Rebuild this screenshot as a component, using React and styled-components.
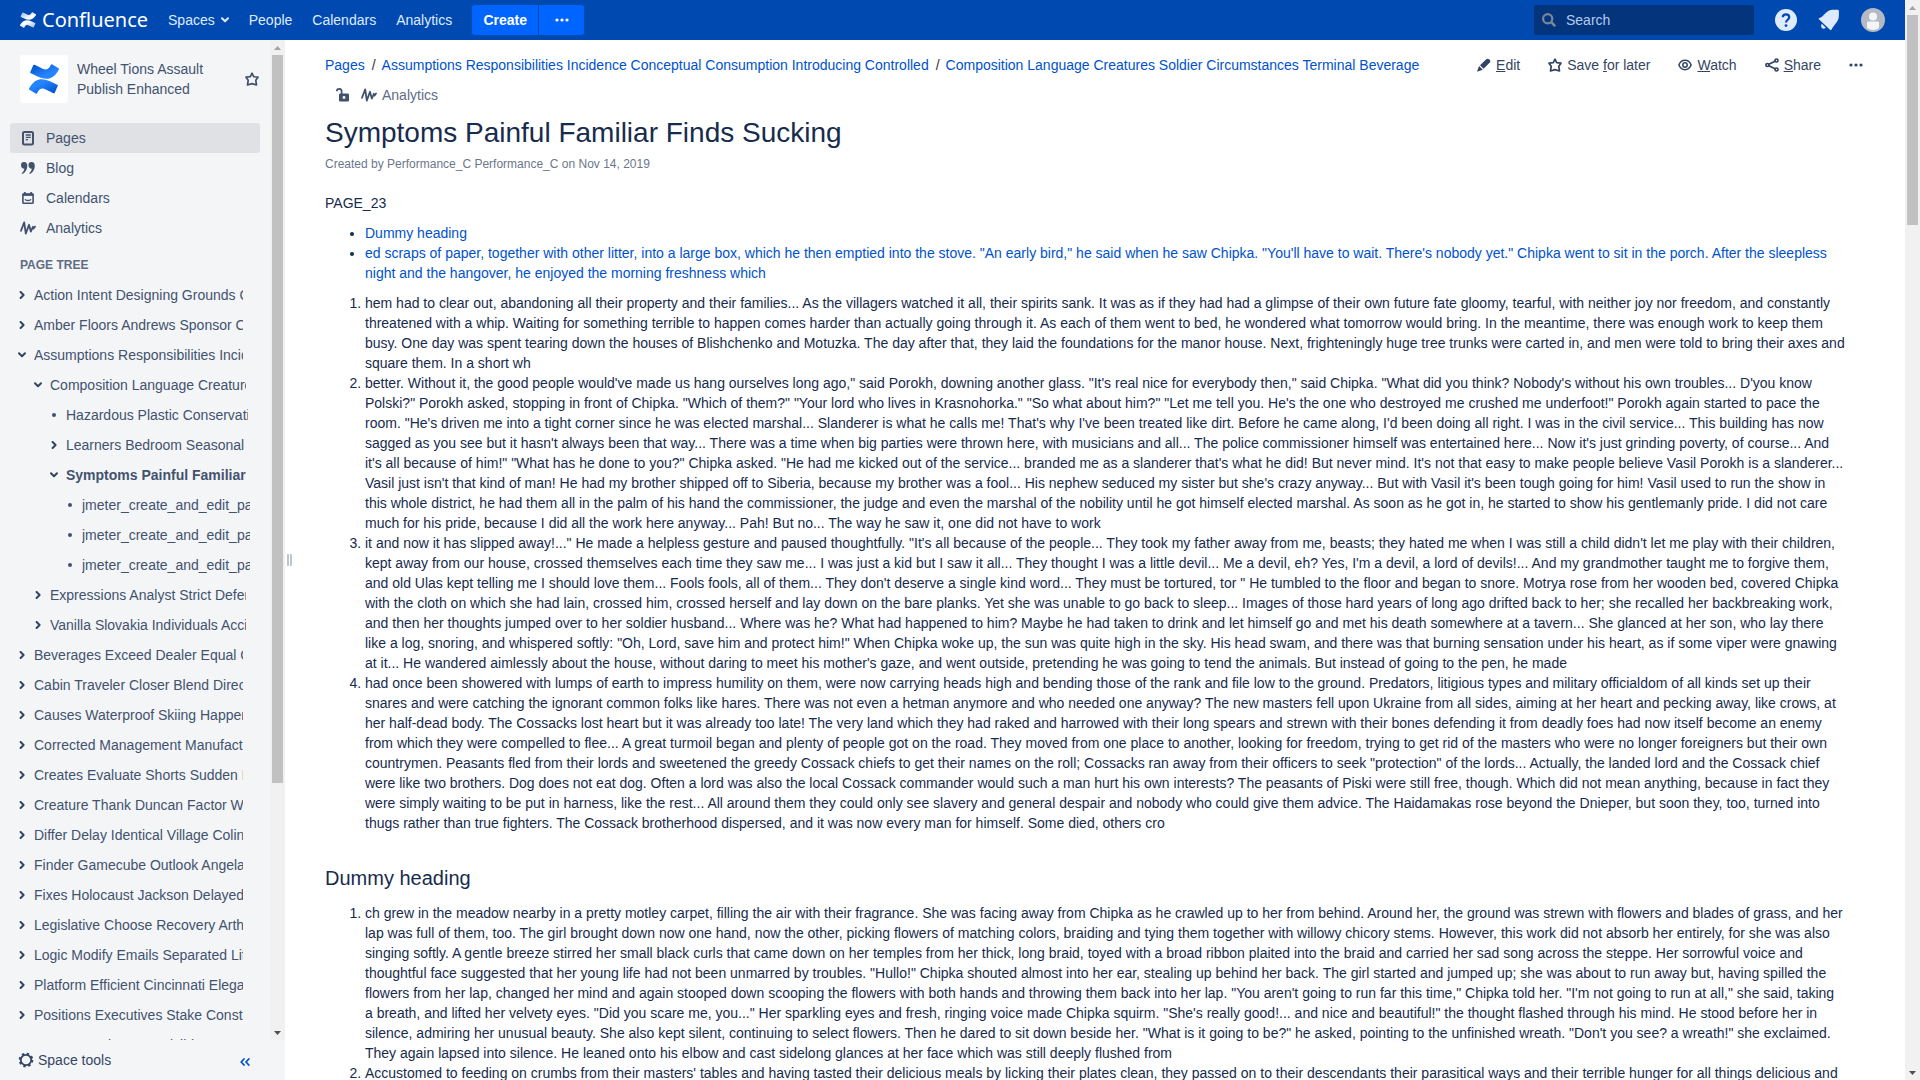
import React from 'react';
import styled, { createGlobalStyle } from 'styled-components';

const GlobalStyle = createGlobalStyle`
  * { box-sizing: border-box; }
  body {
    margin: 0;
    background: #fff;
    color: #172b4d;
    font-family: "Liberation Sans", Arial, sans-serif;
    font-size: 14px;
    line-height: 20px;
  }
  a { color: inherit; text-decoration: none; }
  button, input { font: inherit; }
  svg { display: block; flex: none; }
`;

const Window = styled.div`
  display: flex;
  height: 100vh;
  overflow: hidden;
`;

const Column = styled.div`
  flex: 1;
  min-width: 0;
  display: flex;
  flex-direction: column;
`;

/* ---------- header ---------- */

const Header = styled.header`
  flex: none;
  display: flex;
  align-items: center;
  justify-content: space-between;
  height: 40px;
  padding: 0 20px;
  background: #0049b0;
  color: #deebff;
`;

const HeaderSide = styled.div`
  display: flex;
  align-items: center;
  gap: ${(p) => p.$gap || 0}px;
`;

const Brand = styled.a`
  display: flex;
  align-items: center;
  gap: 6px;
  margin-right: 10px;
  color: #fff;
  font-family: "Noto Sans", sans-serif;
  font-size: 20px;
`;

const NavLink = styled.a`
  display: flex;
  align-items: center;
  gap: 6px;
  padding: 0 10px;
`;

const CreateGroup = styled.div`
  display: flex;
  gap: 1px;
  margin-left: 10px;
`;

const CreateButton = styled.button`
  display: flex;
  align-items: center;
  justify-content: center;
  width: ${(p) => p.$width}px;
  height: 30px;
  padding: 0;
  border: 0;
  border-radius: ${(p) => (p.$end ? '0 3px 3px 0' : '3px 0 0 3px')};
  background: #0065ff;
  color: #fff;
  font-weight: bold;
`;

const SearchBox = styled.label`
  display: flex;
  align-items: center;
  gap: 10px;
  width: 220px;
  height: 30px;
  padding: 0 8px;
  border-radius: 3px;
  background: #03347c;
`;

const SearchInput = styled.input`
  flex: 1;
  min-width: 0;
  padding: 0;
  border: 0;
  outline: 0;
  background: transparent;
  color: #deebff;
  &::placeholder { color: #b3cbee; opacity: 1; }
`;

const IconButton = styled.button`
  display: flex;
  align-items: center;
  padding: 0;
  border: 0;
  background: none;
  color: inherit;
`;

/* ---------- scroll bars ---------- */

const Track = styled.div`
  flex: none;
  display: flex;
  flex-direction: column;
  align-items: center;
  width: 15px;
  background: #f1f1f1;
`;

const TrackEnd = styled.div`
  flex: none;
  display: flex;
  align-items: center;
  justify-content: center;
  height: 15px;
`;

const TrackBody = styled.div`
  flex: 1;
  width: 11px;
`;

const Thumb = styled.div`
  height: ${(p) => p.$size}%;
  background: #c1c1c1;
`;

function ScrollBar({ size }) {
  return (
    <Track aria-hidden="true">
      <TrackEnd><svg width="7" height="4"><path d="M3.5 0 7 4H0z" fill="#a3a3a3" /></svg></TrackEnd>
      <TrackBody><Thumb $size={size} /></TrackBody>
      <TrackEnd><svg width="7" height="4"><path d="M0 0h7L3.5 4z" fill="#505050" /></svg></TrackEnd>
    </Track>
  );
}

/* ---------- side bar ---------- */

const Body = styled.div`
  flex: 1;
  min-height: 0;
  display: flex;
`;

const Sidebar = styled.aside`
  flex: none;
  display: flex;
  flex-direction: column;
  width: 285px;
  background: #f4f5f7;
  color: #42526e;
`;

const SideScroll = styled.div`
  flex: 1;
  min-height: 0;
  display: flex;
`;

const SideContent = styled.div`
  flex: 1;
  min-width: 0;
  overflow: hidden;
  padding: 15px 10px 0;
`;

const SpaceHead = styled.div`
  display: flex;
  align-items: center;
  gap: 9px;
  padding: 0 1px 0 10px;
  margin-bottom: 20px;
`;

const SpaceLogo = styled.a`
  flex: none;
  display: flex;
  align-items: center;
  justify-content: center;
  width: 48px;
  height: 48px;
  border-radius: 3px;
  background: #fff;
`;

const SpaceName = styled.a`
  flex: 1;
`;

const SideLink = styled.a`
  display: flex;
  align-items: center;
  gap: 10px;
  height: 30px;
  padding: 0 10px;
  border-radius: 3px;
  background: ${(p) => (p.$active ? '#dfe1e5' : 'transparent')};
`;

const TreeTitle = styled.h2`
  margin: 0;
  padding: 12px 10px 5px;
  color: #5e6c84;
  font-size: 12px;
  line-height: 20px;
`;

const Tree = styled.ul`
  margin: 0;
  padding: 0;
  list-style: none;
`;

const TREE_END = [17, 14, 12, 10];

const TreeItem = styled.li`
  display: flex;
  align-items: center;
  gap: 4px;
  height: 30px;
  padding-left: ${(p) => 4 + p.$level * 16}px;
  padding-right: ${(p) => TREE_END[p.$level]}px;
`;

const Twisty = styled.button`
  flex: none;
  display: flex;
  align-items: center;
  justify-content: center;
  width: 16px;
  height: 16px;
  padding: 0;
  border: 0;
  background: none;
  color: #344563;
`;

const Dot = styled.span`
  flex: none;
  width: 16px;
  display: flex;
  justify-content: center;
  &::before {
    content: "";
    width: 4px;
    height: 4px;
    border-radius: 50%;
    background: #42526e;
  }
`;

const TreeLink = styled.a`
  flex: 1;
  overflow: hidden;
  white-space: nowrap;
  font-weight: ${(p) => (p.$current ? 'bold' : 'normal')};
`;

const SideFoot = styled.div`
  flex: none;
  display: flex;
  align-items: center;
  justify-content: space-between;
  height: 40px;
  padding: 0 35px 0 18px;
`;

const FootButton = styled(IconButton)`
  gap: 4px;
  color: #344563;
`;

const CollapseButton = styled(IconButton)`
  padding-top: 4px;
  color: #0052cc;
`;

const Splitter = styled.div`
  flex: none;
  display: flex;
  align-items: center;
  gap: 1px;
  width: 10px;
  padding-left: 2px;
  &::before, &::after {
    content: "";
    width: 2px;
    height: 12px;
    background: #c1c7d0;
  }
`;

/* ---------- page ---------- */

const Main = styled.main`
  flex: 1;
  min-width: 0;
  overflow: hidden;
  padding: 10px 40px 0 30px;
`;

const TopRow = styled.div`
  display: flex;
  align-items: flex-start;
`;

const Crumbs = styled.nav`
  flex: 1;
  min-width: 0;
  display: flex;
  flex-wrap: wrap;
  line-height: 30px;
`;

const Crumb = styled.a`
  color: #0052cc;
`;

const Slash = styled.span`
  padding: 0 6px 0 7px;
  color: #333;
`;

const CrumbTools = styled.div`
  display: flex;
  align-items: center;
  gap: 10px;
  padding: 0 10px;
  height: 30px;
`;

const CrumbButton = styled(IconButton)`
  gap: 5px;
  color: #42526e;
`;

const Analytics = styled.span`
  color: #5e6c84;
`;

const Actions = styled.div`
  display: flex;
  align-items: center;
  gap: 28px;
  height: 30px;
  padding-right: 2px;
`;

const Action = styled.a`
  display: flex;
  align-items: center;
  gap: 5px;
  color: #344563;
`;

const MoreButton = styled(IconButton)`
  color: #344563;
`;

const Title = styled.h1`
  margin: 7px 0 0;
  font-size: 28px;
  font-weight: normal;
  line-height: 32px;
`;

const Meta = styled.p`
  margin: 5px 0 0;
  color: #6b778c;
  font-size: 12px;
`;

const Article = styled.article`
  padding: 19px 20px 0 0;
  p { margin: 0; }
  ul, ol { margin: 10px 0 0; padding-left: 40px; }
  h2 {
    margin: 30px 0 0;
    font-size: 20px;
    font-weight: normal;
    line-height: 30px;
  }
  a { color: #0052cc; }
`;

/* ---------- drawings ---------- */

const MARK_LOW = 'M.87 18.257c-.248.382-.53.875-.763 1.245a.764.764 0 0 0 .255 1.04l4.965 3.054a.764.764 0 0 0 1.058-.26c.199-.332.454-.763.733-1.221 1.967-3.247 3.945-2.853 7.508-1.146l4.957 2.337a.764.764 0 0 0 1.028-.382l2.364-5.346a.764.764 0 0 0-.382-1 599.851 599.851 0 0 1-4.965-2.361C10.911 10.97 5.224 11.185.87 18.257z';
const MARK_HIGH = 'M23.131 5.743c.249-.405.531-.875.764-1.25a.764.764 0 0 0-.256-1.034L18.675.404a.764.764 0 0 0-1.058.26c-.195.335-.451.763-.734 1.225-1.966 3.246-3.945 2.85-7.508 1.146L4.437.694a.764.764 0 0 0-1.027.382L1.046 6.422a.764.764 0 0 0 .382 1c1.039.49 3.105 1.467 4.965 2.361 6.698 3.246 12.392 3.029 16.738-4.04z';

function Mark({ id, size, dark, light }) {
  return (
    <svg width={size} height={size} viewBox="0 0 24 24">
      <defs>
        <linearGradient id={`${id}-low`} x1="1" y1="1" x2="0.2" y2="0.2">
          <stop offset="0.1" stopColor={dark} /><stop offset="0.8" stopColor={light} />
        </linearGradient>
        <linearGradient id={`${id}-high`} x1="0" y1="0" x2="0.8" y2="0.8">
          <stop offset="0.1" stopColor={dark} /><stop offset="0.8" stopColor={light} />
        </linearGradient>
      </defs>
      <path d={MARK_LOW} fill={`url(#${id}-low)`} />
      <path d={MARK_HIGH} fill={`url(#${id}-high)`} />
    </svg>
  );
}

const Line = ({ w = 16, h = 16, sw = 2, children }) => (
  <svg width={w} height={h} viewBox={`0 0 ${w} ${h}`} fill="none" stroke="currentColor" strokeWidth={sw} strokeLinecap="round" strokeLinejoin="round">
    {children}
  </svg>
);

const ChevronDown = () => <Line w={8} h={6}><path d="M1 1.2l3 3 3-3" /></Line>;
const ChevronRight = () => <Line w={6} h={8}><path d="M1.6 1l3 3-3 3" /></Line>;
const Collapse = () => <Line w={10} h={8} sw={1.8}><path d="M4 1L1.2 4 4 7M8.8 1L6 4l2.8 3" /></Line>;
const Dots = () => (
  <svg width="14" height="4" fill="currentColor"><circle cx="2" cy="2" r="1.6" /><circle cx="7" cy="2" r="1.6" /><circle cx="12" cy="2" r="1.6" /></svg>
);
const Star = () => (
  <Line w={14} h={14} sw={1.7}><path d="M7 1.2l1.7 3.5 4.3.5-2.2 3.1.7 4.7L7 11.6 2.5 13l.7-4.7L1 5.2l4.3-.5z" /></Line>
);
const Wave = () => (
  <Line w={16} h={14} sw={1.8}><path d="M1 9.800L4.200 1.400 5.800 12.600 9 3.800 10.800 10.600 12.900 5.800 13.600 7.600 15 5.600" /></Line>
);
const PageIcon = () => (
  <Line><rect x="3" y="2" width="10" height="12.5" rx="1.5" /><path d="M5.800 5h5M5.800 7.300h5M5.800 9.600h2.200" strokeWidth="1.300" strokeLinecap="butt" /></Line>
);
const QuoteIcon = () => (
  <svg width="16" height="16" fill="currentColor">
    <path d="M1 5.2A3.1 3.1 0 0 1 4.200 2C6.200 2 7.300 3.600 7.300 6c0 3.600-2 6.600-4.900 8l-.7-.8c1.500-1.200 2.400-2.700 2.600-4.500C2.400 8.700 1 7.200 1 5.200z" />
    <path d="M8.500 5.200A3.1 3.1 0 0 1 11.700 2c2 0 3.100 1.600 3.100 4 0 3.600-2 6.600-4.900 8l-.7-.8c1.500-1.200 2.400-2.700 2.600-4.500-1.900 0-3.300-1.500-3.300-3.500z" />
  </svg>
);
const CalendarIcon = () => (
  <svg width="16" height="16" fill="none" stroke="currentColor">
    <rect x="2.900" y="4" width="10.200" height="9.200" rx="0.800" strokeWidth="1.600" />
    <path d="M2.500 4.700h11" strokeWidth="2.400" />
    <path d="M4.800 2v2M11.200 2v2" strokeWidth="1.800" />
    <path d="M5 9.200c.8 1.700 5.200 1.700 6 0" strokeWidth="1.300" />
  </svg>
);
const GearIcon = () => (
  <svg width="16" height="16" viewBox="0 0 16 16" fill="none" stroke="currentColor">
    <circle cx="8" cy="8" r="5.200" strokeWidth="1.800" />
    <circle cx="8" cy="8" r="6.300" strokeWidth="2" strokeDasharray="2.470 2.470" />
  </svg>
);
const LockIcon = () => (
  <svg width="16" height="16">
    <rect x="4" y="6.500" width="10" height="8" rx="1.200" fill="#42526e" />
    <path d="M1.800 4.200a2.400 2.400 0 0 1 4.800 0v3" fill="none" stroke="#42526e" strokeWidth="1.700" />
    <circle cx="9" cy="10.500" r="1.400" fill="#fff" />
  </svg>
);
const PencilIcon = () => (
  <svg width="14" height="14" fill="currentColor">
    <path d="M9.300 1.300c.9-.9 2-.8 2.800-.1l.7.700c.8.800.8 1.900 0 2.700L6.600 10.800 3 7.300zM2.100 8.100l3.700 3.700L.8 13.500c-.4.100-.7-.2-.6-.6z" />
  </svg>
);
const EyeIcon = () => (
  <Line w={14} h={14} sw={1.5}><path d="M.9 7C3.200.8 10.800.8 13.100 7 10.800 13.200 3.200 13.200.9 7z" /><circle cx="7" cy="7" r="2.200" /></Line>
);
const ShareIcon = () => (
  <Line w={14} h={14} sw={1.7}>
    <circle cx="11.500" cy="2.500" r="1.500" /><circle cx="2.400" cy="7" r="1.500" /><circle cx="11.500" cy="11.500" r="1.500" />
    <path d="M3.800 6.300l6.300-3.100M3.800 7.700l6.300 3.100" />
  </Line>
);
const SearchIcon = () => (
  <svg width="14" height="14" fill="none" stroke="#7a8699"><circle cx="5.700" cy="5.700" r="4.600" strokeWidth="2.200" /><path d="M9.200 9.200l4 4" strokeWidth="2.600" /></svg>
);
const HelpIcon = () => (
  <svg width="22" height="22" fill="none">
    <circle cx="11" cy="11" r="11" fill="#deebff" />
    <path d="M7.800 8.300c0-4 6.400-4 6.400 0 0 2.400-3.200 2.500-3.200 5.200" stroke="#0049b0" strokeWidth="2.200" />
    <circle cx="11" cy="16.600" r="1.400" fill="#0049b0" />
  </svg>
);
const BellIcon = () => (
  <svg width="22" height="22" fill="#deebff">
    <path d="M1 9.300C6.500 7.600 8 .8 15 .8c2.500 0 4.600-.3 5.200 0 1 .6.700 2.300.7 5.700 0 6-4.500 8.500-7.500 14.200-.2.500-.7.600-1.100.2L.9 10.200c-.4-.4-.3-.8.1-.9z" />
    <path d="M3.800 14.800l4 4c-1.500 1.500-3 1.200-3.800.3-.9-.9-1.200-2.700-.2-4.300z" />
  </svg>
);
const Avatar = () => (
  <svg width="24" height="24">
    <circle cx="12" cy="12" r="12" fill="#b3bac5" />
    <circle cx="12" cy="8.500" r="4" fill="#f4f5f7" />
    <path d="M6 15.500c0-1.500.7-2 2-2h8c1.300 0 2 .5 2 2v4.200c-3 3-9 3-12 0z" fill="#f4f5f7" />
  </svg>
);

/* ---------- data ---------- */

const SIDE_LINKS = [
  ['Pages', PageIcon],
  ['Blog', QuoteIcon],
  ['Calendars', CalendarIcon],
  ['Analytics', Wave],
];

// [label, level, state, current]
const TREE = [
  ['Action Intent Designing Grounds Creek', 0, 'closed'],
  ['Amber Floors Andrews Sponsor Charm', 0, 'closed'],
  ['Assumptions Responsibilities Incidence Conceptual Consumption', 0, 'open'],
  ['Composition Language Creatures Soldier Circumstances', 1, 'open'],
  ['Hazardous Plastic Conservation', 2, 'leaf'],
  ['Learners Bedroom Seasonal', 2, 'closed'],
  ['Symptoms Painful Familiar Finds Sucking', 2, 'open', true],
  ['jmeter_create_and_edit_page', 3, 'leaf'],
  ['jmeter_create_and_edit_page', 3, 'leaf'],
  ['jmeter_create_and_edit_page', 3, 'leaf'],
  ['Expressions Analyst Strict Defense', 1, 'closed'],
  ['Vanilla Slovakia Individuals Accident', 1, 'closed'],
  ['Beverages Exceed Dealer Equal Cheap', 0, 'closed'],
  ['Cabin Traveler Closer Blend Direct', 0, 'closed'],
  ['Causes Waterproof Skiing Happened', 0, 'closed'],
  ['Corrected Management Manufacturing', 0, 'closed'],
  ['Creates Evaluate Shorts Sudden Drives', 0, 'closed'],
  ['Creature Thank Duncan Factor Wood', 0, 'closed'],
  ['Differ Delay Identical Village Colin', 0, 'closed'],
  ['Finder Gamecube Outlook Angela', 0, 'closed'],
  ['Fixes Holocaust Jackson Delayed', 0, 'closed'],
  ['Legislative Choose Recovery Arthur', 0, 'closed'],
  ['Logic Modify Emails Separated Lifetime', 0, 'closed'],
  ['Platform Efficient Cincinnati Elegant', 0, 'closed'],
  ['Positions Executives Stake Construct', 0, 'closed'],
  ['Programs Elements Visible', 0, 'closed'],
];

const FIRST_LIST = [
  `hem had to clear out, abandoning all their property and their families... As the villagers watched it all, their spirits sank. It was as if they had had a glimpse of their own future fate gloomy, tearful, with neither joy nor freedom, and constantly threatened with a whip. Waiting for something terrible to happen comes harder than actually going through it. As each of them went to bed, he wondered what tomorrow would bring. In the meantime, there was enough work to keep them busy. One day was spent tearing down the houses of Blishchenko and Motuzka. The day after that, they laid the foundations for the manor house. Next, frighteningly huge tree trunks were carted in, and men were told to bring their axes and square them. In a short wh`,
  `better. Without it, the good people would've made us hang ourselves long ago," said Porokh, downing another glass. "It's real nice for everybody then," said Chipka. "What did you think? Nobody's without his own troubles... D'you know Polski?" Porokh asked, stopping in front of Chipka. "Which of them?" "Your lord who lives in Krasnohorka." "So what about him?" "Let me tell you. He's the one who destroyed me crushed me underfoot!" Porokh again started to pace the room. "He's driven me into a tight corner since he was elected marshal... Slanderer is what he calls me! That's why I've been treated like dirt. Before he came along, I'd been doing all right. I was in the civil service... This building has now sagged as you see but it hasn't always been that way... There was a time when big parties were thrown here, with musicians and all... The police commissioner himself was entertained here... Now it's just grinding poverty, of course... And it's all because of him!" "What has he done to you?" Chipka asked. "He had me kicked out of the service... branded me as a slanderer that's what he did! But never mind. It's not that easy to make people believe Vasil Porokh is a slanderer... Vasil just isn't that kind of man! He had my brother shipped off to Siberia, because my brother was a fool... His nephew seduced my sister but she's crazy anyway... But with Vasil it's been tough going for him! Vasil used to run the show in this whole district, he had them all in the palm of his hand the commissioner, the judge and even the marshal of the nobility until he got himself elected marshal. As soon as he got in, he started to show his gentlemanly pride. I did not care much for his pride, because I did all the work here anyway... Pah! But no... The way he saw it, one did not have to work`,
  `it and now it has slipped away!..." He made a helpless gesture and paused thoughtfully. "It's all because of the people... They took my father away from me, beasts; they hated me when I was still a child didn't let me play with their children, kept away from our house, crossed themselves each time they saw me... I was just a kid but I saw it all... They thought I was a little devil... Me a devil, eh? Yes, I'm a devil, a lord of devils!... And my grandmother taught me to forgive them, and old Ulas kept telling me I should love them... Fools fools, all of them... They don't deserve a single kind word... They must be tortured, tor " He tumbled to the floor and began to snore. Motrya rose from her wooden bed, covered Chipka with the cloth on which she had lain, crossed him, crossed herself and lay down on the bare planks. Yet she was unable to go back to sleep... Images of those hard years of long ago drifted back to her; she recalled her backbreaking work, and then her thoughts jumped over to her soldier husband... Where was he? What had happened to him? Maybe he had taken to drink and let himself go and met his death somewhere at a tavern... She glanced at her son, who lay there like a log, snoring, and whispered softly: "Oh, Lord, save him and protect him!" When Chipka woke up, the sun was quite high in the sky. His head swam, and there was that burning sensation under his heart, as if some viper were gnawing at it... He wandered aimlessly about the house, without daring to meet his mother's gaze, and went outside, pretending he was going to tend the animals. But instead of going to the pen, he made`,
  `had once been showered with lumps of earth to impress humility on them, were now carrying heads high and bending those of the rank and file low to the ground. Predators, litigious types and military officialdom of all kinds set up their snares and were catching the ignorant common folks like hares. There was not even a hetman anymore and who needed one anyway? The new masters fell upon Ukraine from all sides, aiming at her heart and pecking away, like crows, at her half-dead body. The Cossacks lost heart but it was already too late! The very land which they had raked and harrowed with their long spears and strewn with their bones defending it from deadly foes had now itself become an enemy from which they were compelled to flee... A great turmoil began and plenty of people got on the road. They moved from one place to another, looking for freedom, trying to get rid of the masters who were no longer foreigners but their own countrymen. Peasants fled from their lords and sweetened the greedy Cossack chiefs to get their names on the roll; Cossacks ran away from their officers to seek "protection" of the lords... Actually, the landed lord and the Cossack chief were like two brothers. Dog does not eat dog. Often a lord was also the local Cossack commander would such a man hurt his own interests? The peasants of Piski were still free, though. Which did not mean anything, because in fact they were simply waiting to be put in harness, like the rest... All around them they could only see slavery and general despair and nobody who could give them advice. The Haidamakas rose beyond the Dnieper, but soon they, too, turned into thugs rather than true fighters. The Cossack brotherhood dispersed, and it was now every man for himself. Some died, others cro`,
];

const SECOND_LIST = [
  `ch grew in the meadow nearby in a pretty motley carpet, filling the air with their fragrance. She was facing away from Chipka as he crawled up to her from behind. Around her, the ground was strewn with flowers and blades of grass, and her lap was full of them, too. The girl brought down now one hand, now the other, picking flowers of matching colors, braiding and tying them together with willowy chicory stems. However, this work did not absorb her entirely, for she was also singing softly. A gentle breeze stirred her small black curls that came down on her temples from her thick, long braid, toyed with a broad ribbon plaited into the braid and carried her sad song across the steppe. Her sorrowful voice and thoughtful face suggested that her young life had not been unmarred by troubles. "Hullo!" Chipka shouted almost into her ear, stealing up behind her back. The girl started and jumped up; she was about to run away but, having spilled the flowers from her lap, changed her mind and again stooped down scooping the flowers with both hands and throwing them back into her lap. "You aren't going to run far this time," Chipka told her. "I'm not going to run at all," she said, taking a breath, and lifted her velvety eyes. "Did you scare me, you..." Her sparkling eyes and fresh, ringing voice made Chipka squirm. "She's really good!... and nice and beautiful!" the thought flashed through his mind. He stood before her in silence, admiring her unusual beauty. She also kept silent, continuing to select flowers. Then he dared to sit down beside her. "What is it going to be?" he asked, pointing to the unfinished wreath. "Don't you see? a wreath!" she exclaimed. They again lapsed into silence. He leaned onto his elbow and cast sidelong glances at her face which was still deeply flushed from`,
  `Accustomed to feeding on crumbs from their masters' tables and having tasted their delicious meals by licking their plates clean, they passed on to their descendants their parasitical ways and their terrible hunger for all things delicious and`,
];

export default function App() {
  return (
    <Window>
      <GlobalStyle />
      <Column>
        <Header>
          <HeaderSide>
            <Brand href="#home"><Mark id="brand" size={16} dark="#9dbbe6" light="#ffffff" />Confluence</Brand>
            <NavLink href="#spaces">Spaces<ChevronDown /></NavLink>
            <NavLink href="#people">People</NavLink>
            <NavLink href="#calendars">Calendars</NavLink>
            <NavLink href="#analytics">Analytics</NavLink>
            <CreateGroup>
              <CreateButton $width={66}>Create</CreateButton>
              <CreateButton $width={45} $end aria-label="Create from template"><Dots /></CreateButton>
            </CreateGroup>
          </HeaderSide>
          <HeaderSide $gap={21}>
            <SearchBox>
              <SearchIcon />
              <SearchInput type="text" placeholder="Search" aria-label="Search" />
            </SearchBox>
            <IconButton aria-label="Help"><HelpIcon /></IconButton>
            <IconButton aria-label="Notifications"><BellIcon /></IconButton>
            <IconButton aria-label="Profile"><Avatar /></IconButton>
          </HeaderSide>
        </Header>

        <Body>
          <Sidebar>
            <SideScroll>
              <SideContent>
                <SpaceHead>
                  <SpaceLogo href="#space" aria-label="Space home"><Mark id="space" size={30} dark="#0052cc" light="#2684ff" /></SpaceLogo>
                  <SpaceName href="#space">Wheel Tions Assault Publish Enhanced</SpaceName>
                  <IconButton aria-label="Favourite space"><Star /></IconButton>
                </SpaceHead>
                <nav>
                  {SIDE_LINKS.map(([label, Icon], i) => (
                    <SideLink key={label} href={`#${label}`} $active={i === 0}><Icon />{label}</SideLink>
                  ))}
                </nav>
                <TreeTitle>PAGE TREE</TreeTitle>
                <Tree>
                  {TREE.map(([label, level, state, current], i) => (
                    <TreeItem key={i} $level={level}>
                      {state === 'leaf' ? <Dot /> : (
                        <Twisty aria-label={label} aria-expanded={state === 'open'}>
                          {state === 'open' ? <ChevronDown /> : <ChevronRight />}
                        </Twisty>
                      )}
                      <TreeLink href="#page" $current={current}>{label}</TreeLink>
                    </TreeItem>
                  ))}
                </Tree>
              </SideContent>
              <ScrollBar size={75} />
            </SideScroll>
            <SideFoot>
              <FootButton><GearIcon />Space tools</FootButton>
              <CollapseButton aria-label="Collapse sidebar"><Collapse /></CollapseButton>
            </SideFoot>
          </Sidebar>
          <Splitter />

          <Main>
            <TopRow>
              <Crumbs>
                <Crumb href="#pages">Pages</Crumb><Slash>/</Slash>
                <Crumb href="#a">Assumptions Responsibilities Incidence Conceptual Consumption Introducing Controlled</Crumb><Slash>/</Slash>
                <Crumb href="#b">Composition Language Creatures Soldier Circumstances Terminal Beverage</Crumb>
                <CrumbTools>
                  <IconButton aria-label="Unrestricted"><LockIcon /></IconButton>
                  <CrumbButton><Wave /><Analytics>Analytics</Analytics></CrumbButton>
                </CrumbTools>
              </Crumbs>
              <Actions>
                <Action href="#edit"><PencilIcon /><span><u>E</u>dit</span></Action>
                <Action href="#save"><Star /><span>Save <u>f</u>or later</span></Action>
                <Action href="#watch"><EyeIcon /><span><u>W</u>atch</span></Action>
                <Action href="#share"><ShareIcon /><span><u>S</u>hare</span></Action>
                <MoreButton aria-label="More actions"><Dots /></MoreButton>
              </Actions>
            </TopRow>
            <Title>Symptoms Painful Familiar Finds Sucking</Title>
            <Meta>Created by <a href="#author">Performance_C Performance_C</a> on <a href="#history">Nov 14, 2019</a></Meta>
            <Article>
              <p>PAGE_23</p>
              <ul>
                <li><a href="#dummy">Dummy heading</a></li>
                <li><a href="#scraps">ed scraps of paper, together with other litter, into a large box, which he then emptied into the stove. "An early bird," he said when he saw Chipka. "You'll have to wait. There's nobody yet." Chipka went to sit in the porch. After the sleepless night and the hangover, he enjoyed the morning freshness which</a></li>
              </ul>
              <ol>{FIRST_LIST.map((t) => <li key={t}>{t}</li>)}</ol>
              <h2 id="dummy">Dummy heading</h2>
              <ol>{SECOND_LIST.map((t) => <li key={t}>{t}</li>)}</ol>
            </Article>
          </Main>
        </Body>
      </Column>
      <ScrollBar size={20} />
    </Window>
  );
}
